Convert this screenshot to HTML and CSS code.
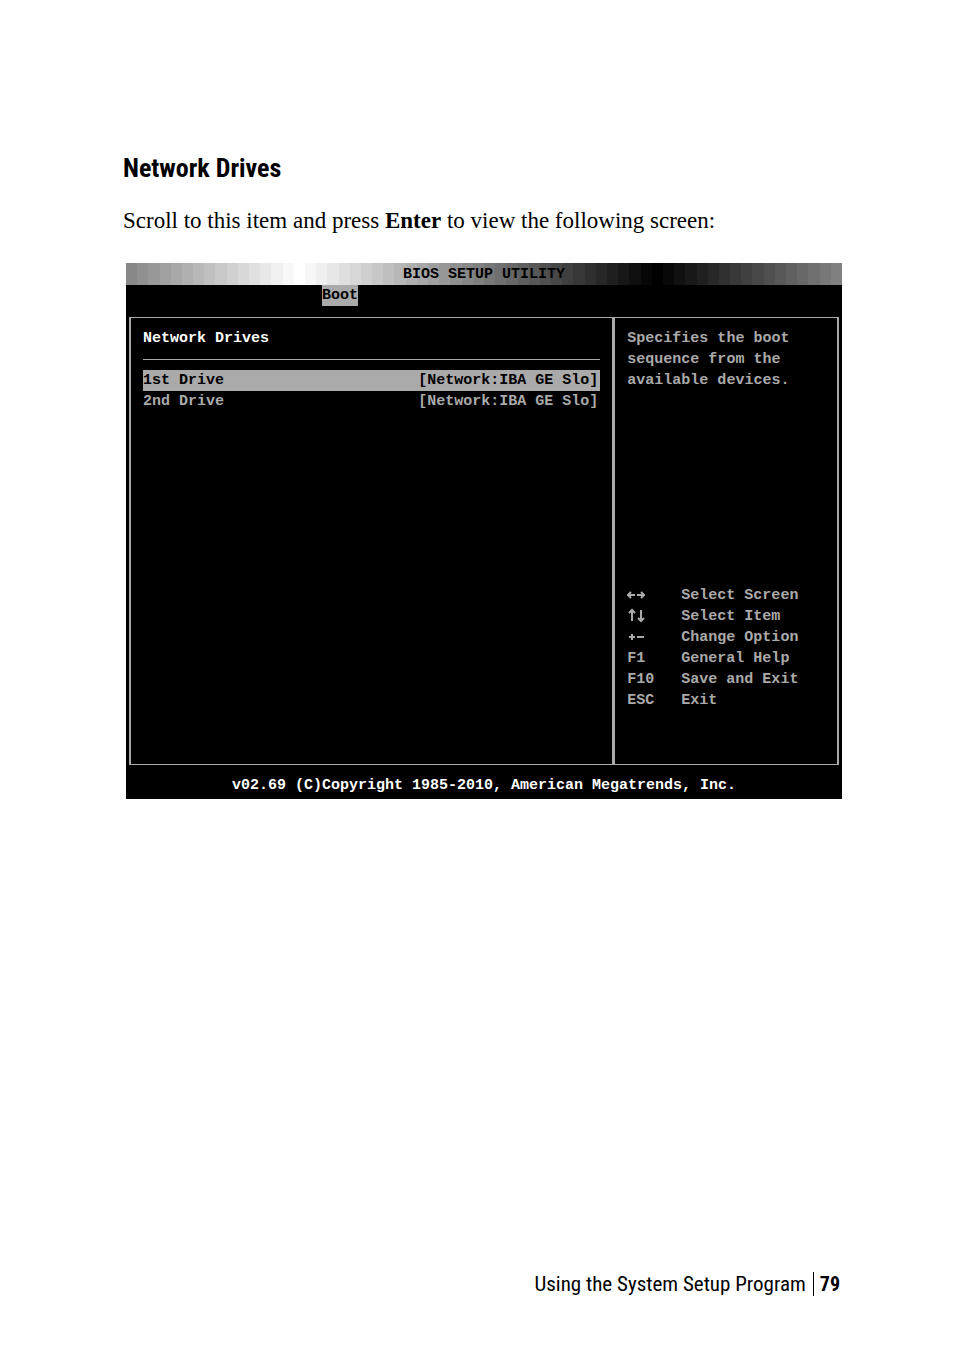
FILE: index.html
```html
<!DOCTYPE html>
<html lang="en">
<head>
    <meta charset="UTF-8">
    <meta name="viewport" content="width=device-width, initial-scale=1.0">
    <title>Network Drives</title>
    <link rel="stylesheet" href="styles.css">
</head>
<body>
    <main class="content">
        <h1>Network Drives</h1>
        <p class="intro">Scroll to this item and press <strong>Enter</strong> to view the following screen:</p>

        <div class="bios">
            <div class="title-bar" id="titleBar">BIOS SETUP UTILITY</div>
            <nav class="tabs">
                <button class="tab">Boot</button>
            </nav>
            <div class="frame">
                <section class="settings">
                    <h2>Network Drives</h2>
                    <button class="row selected"><span>1st Drive</span><span>[Network:IBA GE Slo]</span></button>
                    <button class="row"><span>2nd Drive</span><span>[Network:IBA GE Slo]</span></button>
                </section>
                <aside class="help">
                    <p>Specifies the boot<br>sequence from the<br>available devices.</p>
                    <dl class="keys">
                        <dt>
                            <svg class="arrow" width="18" height="16" viewBox="0 0 18 16">
                                <path d="M1 8H8M4 5L1 8L4 11M10 8H17M14 5L17 8L14 11"/>
                            </svg>
                        </dt>
                        <dd>Select Screen</dd>
                        <dt>
                            <svg class="arrow" width="18" height="16" viewBox="0 0 18 16">
                                <path d="M5 13V2M2 5L5 2L8 5M14 2V13M11 10L14 13L17 10"/>
                            </svg>
                        </dt>
                        <dd>Select Item</dd>
                        <dt>
                            <svg class="arrow" width="18" height="16" viewBox="0 0 18 16">
                                <path d="M2 8H8M5 5V11M10 8H17"/>
                            </svg>
                        </dt>
                        <dd>Change Option</dd>
                        <dt>F1</dt>
                        <dd>General Help</dd>
                        <dt>F10</dt>
                        <dd>Save and Exit</dd>
                        <dt>ESC</dt>
                        <dd>Exit</dd>
                    </dl>
                </aside>
            </div>
            <div class="copyright">v02.69 (C)Copyright 1985-2010, American Megatrends, Inc.</div>
        </div>
    </main>

    <footer class="page-footer">
        <span>Using the System Setup Program</span>
        <span class="page-number">79</span>
    </footer>

    <script>
        // 64 grey bands: up to white, down to black, back up to mid grey
        const bands = 64;
        const stops = [];
        for (let i = 0; i < bands; i++) {
            let level;
            if (i < 15) {
                level = 136 + i * 8;
            } else if (i < 47) {
                level = 255 - (i - 15) * 8;
            } else {
                level = (i - 47) * 8;
            }
            stops.push(`rgb(${level}, ${level}, ${level}) ${i / bands * 100}% ${(i + 1) / bands * 100}%`);
        }
        document.getElementById('titleBar').style.backgroundImage = `linear-gradient(to right, ${stops.join(', ')})`;
    </script>
</body>
</html>
```
FILE: styles.css
```css
* {
    box-sizing: border-box;
}
body {
    margin: 0;
    padding: 150px 112px 58px 123px;
    min-height: 100vh;
    display: flex;
    flex-direction: column;
    justify-content: space-between;
    background: #fff;
    color: #000;
    font-family: "Liberation Serif", serif;
}
h1 {
    margin: 0;
    font-family: "Liberation Sans Narrow", "Roboto Condensed", Roboto, sans-serif;
    font-size: 26px;
    line-height: 36px;
}
.intro {
    margin: 20px 0 27px;
    font-size: 23px;
    line-height: 30px;
}
.bios {
    margin-left: 3px;
    background: #000;
    color: #aaa;
    font-family: "Liberation Mono", monospace;
    font-size: 15px;
    font-weight: bold;
    line-height: 21px;
}
.bios button {
    border: none;
    padding: 0;
    background: none;
    color: inherit;
    font: inherit;
    cursor: pointer;
}
.title-bar {
    padding-top: 1px;
    color: #000;
    text-align: center;
}
.tabs {
    display: flex;
    padding-left: 196px;
}
.bios .tab {
    background: #aaa;
    color: #000;
}
.frame {
    display: grid;
    grid-template-columns: 15fr 7fr;
    min-height: 448px;
    margin: 11px 3px 0;
    border: solid #aaa;
    border-width: 1px 2px;
}
.settings {
    padding: 10px 12px;
}
h2 {
    margin: 0 0 10px;
    padding-bottom: 10px;
    border-bottom: 1px solid #aaa;
    color: #fff;
    font-size: 15px;
}
.bios .row {
    display: flex;
    justify-content: space-between;
    width: 100%;
    padding-right: 2px;
}
.bios .selected {
    background: #aaa;
    color: #000;
}
.help {
    display: flex;
    flex-direction: column;
    justify-content: space-between;
    padding: 10px 12px 53px;
    border-left: 3px solid #aaa;
}
.help p {
    margin: 0;
}
.keys {
    display: grid;
    grid-template-columns: 54px 1fr;
    margin: 0;
}
.keys dd {
    margin: 0;
}
.arrow {
    display: block;
    margin-top: 2px;
    fill: none;
    stroke: #aaa;
    stroke-width: 2;
}
.copyright {
    padding: 10px 0 3px;
    color: #fff;
    text-align: center;
}
.page-footer {
    display: flex;
    justify-content: flex-end;
    padding-right: 2px;
    font-family: "Liberation Sans Narrow", "Roboto Condensed", Roboto, sans-serif;
    font-size: 21px;
    line-height: 24px;
}
.page-number {
    margin-left: 7px;
    padding-left: 6px;
    border-left: 1px solid #000;
    font-size: 20px;
    font-weight: bold;
}
```
